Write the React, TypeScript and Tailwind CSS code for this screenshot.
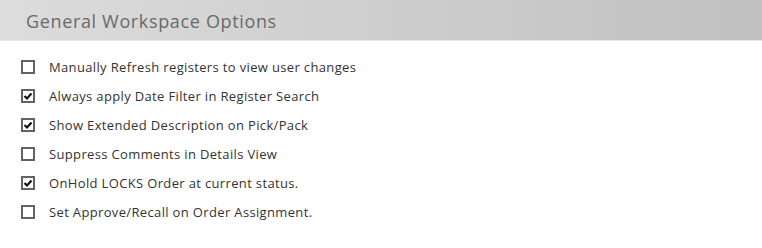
import React from "react";

const items: { label: string; checked: boolean }[] = [
  { label: "Manually Refresh registers to view user changes", checked: false },
  { label: "Always apply Date Filter in Register Search", checked: true },
  { label: "Show Extended Description on Pick/Pack", checked: true },
  { label: "Suppress Comments in Details View", checked: false },
  { label: "OnHold LOCKS Order at current status.", checked: true },
  { label: "Set Approve/Recall on Order Assignment.", checked: false },
];

function Box({ checked }: { checked: boolean }) {
  return (
    <div className="w-[14px] h-[14px] border-2 border-[#636363] bg-white flex items-center justify-center shrink-0">
      {checked && (
        <svg width="10" height="10" viewBox="0 0 10 10">
          <path d="M1.5 5 L4 7.5 L8.5 2.5" stroke="#111" strokeWidth="2.2" fill="none" />
        </svg>
      )}
    </div>
  );
}

export default function App() {
  return (
    <div className="w-[762px] h-[248px] bg-white" style={{ fontFamily: '"Open Sans", "Noto Sans", sans-serif' }}>
      <div className="h-[41px] bg-gradient-to-r from-[#dcdcdc] to-[#c0c0c0] border-b border-[#e6e6e6] flex items-center pl-[26px] pt-[2px]">
        <span className="text-[18px] text-[#6a6a6a] tracking-[0.65px]">General Workspace Options</span>
      </div>
      <div className="flex flex-col pt-[19px] pl-[21px] gap-[15px]">
        {items.map((it) => (
          <div key={it.label} className="flex items-center gap-[14px] h-[14px]">
            <Box checked={it.checked} />
            <span className="text-[13px] text-[#333333] leading-none tracking-[0.35px]">{it.label}</span>
          </div>
        ))}
      </div>
    </div>
  );
}
